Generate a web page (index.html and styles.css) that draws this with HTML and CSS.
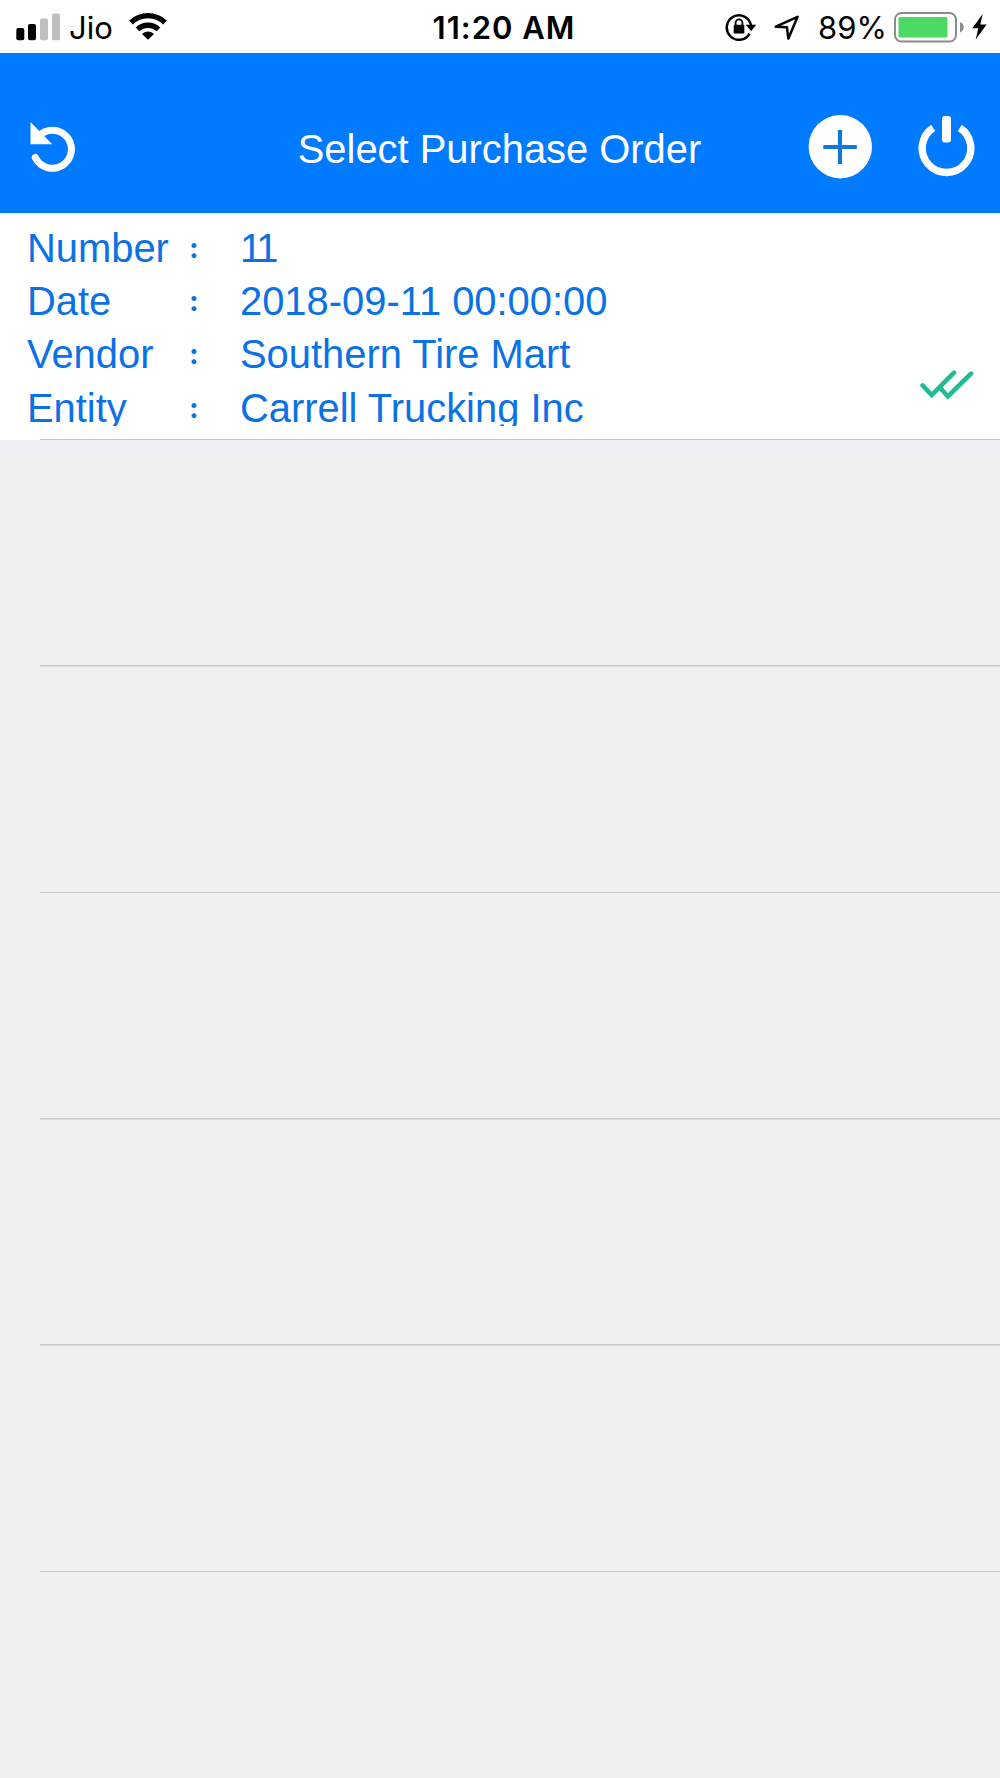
FILE: index.html
```
<!DOCTYPE html>
<html lang="en">
<head>
  <meta charset="UTF-8">
  <meta name="viewport" content="width=device-width, initial-scale=1.0">
  <title>Select Purchase Order</title>
  <link rel="stylesheet" href="styles.css">
</head>
<body>
  <div class="status-bar">
    <div class="status-left">
      <svg class="signal" width="45" height="28" viewBox="0 0 45 28">
        <rect x="0.3" y="15" width="8" height="12.3" rx="2" fill="#000"/>
        <rect x="12" y="11" width="8" height="16.3" rx="2" fill="#000"/>
        <rect x="24" y="5.5" width="8" height="21.8" rx="2" fill="#bfbfbf"/>
        <rect x="36" y="0.5" width="8" height="26.8" rx="2" fill="#bfbfbf"/>
      </svg>
      <span class="carrier">Jio</span>
      <svg class="wifi" width="38" height="28" viewBox="0 0 38 28">
        <g fill="none" stroke="#000" stroke-width="5.3">
          <path d="M2 10.5a24.5 24.5 0 0 1 34 0"/>
          <path d="M8.5 17.4a15.3 15.3 0 0 1 21 0"/>
        </g>
        <path d="M19 27.8l-6-5.8q6-4.8 12 0z"/>
      </svg>
    </div>
    <span class="time">11:20 AM</span>
    <div class="status-right">
      <svg class="lock" width="32" height="28" viewBox="0 0 32 28">
        <path d="M26 12.5A12.2 12.2 0 1 0 24.6 20.6" fill="none" stroke="#000" stroke-width="2.5"/>
        <path d="M20.7 11.8h10.5l-5 6.5z"/>
        <rect x="8.7" y="11.8" width="10.6" height="8.7" rx="1"/>
        <path d="M10.6 13v-3.3a3.4 3.4 0 0 1 6.8 0V13" fill="none" stroke="#000" stroke-width="1.8"/>
      </svg>
      <svg class="location" width="26" height="26" viewBox="0 0 26 26">
        <path d="M1.8 11.7L23.6 1.8l-9.2 21.8-1.5-11.4z" fill="none" stroke="#000" stroke-width="2.5" stroke-linejoin="round"/>
      </svg>
      <span class="percent">89%</span>
      <svg class="battery" width="71" height="31" viewBox="0 0 71 31">
        <rect x="1" y="1" width="61" height="28.5" rx="6.5" fill="#fff" stroke="#8c8c8c" stroke-width="2"/>
        <rect x="4.5" y="5" width="49" height="20.5" rx="1.5" fill="#4cd964"/>
        <path d="M66 10q3.7 1.5 3.7 5.2t-3.7 5.2z" fill="#8c8c8c"/>
      </svg>
      <svg class="bolt" width="15" height="26" viewBox="0 0 15 26">
        <path d="M10.7 0L0.3 14.3h6L3.7 25.5 14.6 10.5H8.3z"/>
      </svg>
    </div>
  </div>

  <div class="navbar">
    <svg class="undo" width="46" height="50" viewBox="0 0 46 50">
      <path d="M8.5 14.3A19 19 0 1 1 5.3 35.5" fill="none" stroke="#fff" stroke-width="7" stroke-linecap="round"/>
      <path d="M0.5 0v22.3h21.7z" fill="#fff"/>
    </svg>
    <h1 class="title">Select Purchase Order</h1>
    <div class="actions">
      <svg class="add" width="64" height="66" viewBox="0 0 64 66">
        <circle cx="32.3" cy="32.7" r="31.7" fill="#fff"/>
        <path d="M15.3 33h33.5M32 15.9v34" stroke="#1278d8" stroke-width="4.2"/>
      </svg>
      <svg class="power" width="57" height="62" viewBox="0 0 57 62">
        <path d="M15.2 11.8A24.3 24.3 0 1 0 41.8 11.8" fill="none" stroke="#fff" stroke-width="7.4"/>
        <rect x="24" y="0" width="9" height="26.5" rx="3" fill="#fff"/>
      </svg>
    </div>
  </div>

  <div class="list">
    <div class="row order">
      <div class="fields">
        <span>Number</span><span class="colon">:</span><span class="number">11</span>
        <span>Date</span><span class="colon">:</span><span>2018-09-11 00:00:00</span>
        <span>Vendor</span><span class="colon">:</span><span>Southern Tire Mart</span>
        <span class="last">Entity</span><span class="colon">:</span><span class="last">Carrell Trucking Inc</span>
      </div>
      <svg class="checks" width="54" height="30" viewBox="0 0 54 30">
        <path d="M2.6 15.4L11.7 25 34 2.6M19.7 17.3l8.2 9.2L51 3.7" fill="none" stroke="#1fbd95" stroke-width="4.6" stroke-linecap="round"/>
      </svg>
    </div>
    <div class="row"></div>
    <div class="row"></div>
    <div class="row"></div>
    <div class="row"></div>
    <div class="row"></div>
  </div>
</body>
</html>
```

FILE: styles.css
```
body {
  margin: 0;
  height: 1778px;
  background: #efeff4;
  font-family: "Liberation Sans", Helvetica, Arial, sans-serif;
  overflow: hidden;
}
svg {
  display: block;
  flex: none;
}
.status-bar {
  display: grid;
  grid-template-columns: 1fr auto 1fr;
  height: 53px;
  background: #fff;
  color: #000;
  font-family: Inter, "Liberation Sans", sans-serif;
  font-size: 31px;
  line-height: 56px;
}
.status-left, .status-right {
  display: flex;
  align-items: flex-start;
}
.status-left {
  padding-left: 16px;
}
.status-right {
  justify-content: flex-end;
  padding-right: 13px;
}
.signal {
  margin-top: 13px;
}
.carrier {
  width: 45px;
  margin-left: 8px;
}
.wifi {
  margin: 12px 0 0 15px;
}
.time {
  margin-left: 8px;
  font-size: 31px;
  font-weight: 600;
  letter-spacing: 1px;
}
.lock {
  margin: 13px 17px 0 0;
}
.location {
  margin: 15px 18px 0 0;
}
.percent {
  width: 68px;
  margin-right: 8px;
}
.battery {
  margin-top: 12px;
}
.bolt {
  margin: 14px 0 0 7px;
}
.navbar {
  display: flex;
  align-items: flex-start;
  justify-content: space-between;
  height: 160px;
  padding: 0 25px 0 30px;
  box-sizing: border-box;
  background: #007aff;
}
.undo {
  margin-top: 69px;
}
.title {
  margin: 72px 0 0 115px;
  color: #fff;
  font-size: 39.9px;
  font-weight: 400;
  line-height: 48px;
  white-space: nowrap;
}
.actions {
  display: flex;
  gap: 46px;
}
.add {
  margin-top: 61px;
}
.power {
  margin-top: 63px;
}
.row {
  height: 226.4px;
  box-sizing: border-box;
  background: linear-gradient(#c8c7cc, #c8c7cc) 40px 100% / 100% 1.5px no-repeat;
}
.order {
  display: flex;
  justify-content: space-between;
  height: 227.4px;
  padding: 9px 26px 0 27px;
  background-color: #fff;
}
.fields {
  display: grid;
  grid-template-columns: 160px 53px auto;
  grid-auto-rows: 53.2px;
  align-content: start;
  color: #0a72e6;
  font-size: 39.9px;
  line-height: 53px;
  white-space: nowrap;
}
.colon {
  padding-left: 2px;
  font-family: Inter, "Liberation Sans", sans-serif;
  font-size: 29px;
  font-weight: 700;
  line-height: 51px;
}
.number {
  letter-spacing: -3px;
}
/* the label frame is shorter than the line, so descenders are cut */
.last {
  height: 44.6px;
  overflow: hidden;
}
.checks {
  margin-top: 148px;
}
```
